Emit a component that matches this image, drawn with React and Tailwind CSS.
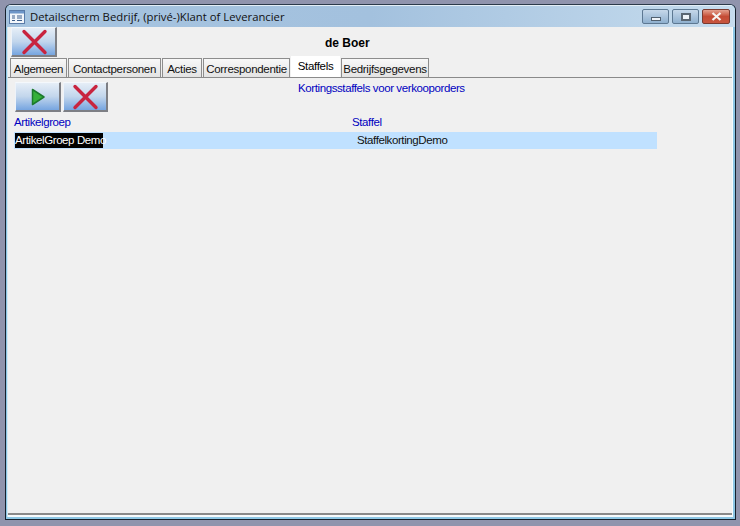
const sans = "font-['Liberation_Sans',Arial,sans-serif]";

function RedX() {
  return (
    <svg width="30" height="26" viewBox="0 0 30 26" className="block">
      <path d="M5 2.500 L26 23.500 M26 2.500 L5 23.500" stroke="#c8243f" strokeWidth="3.400" strokeLinecap="round" fill="none" />
    </svg>
  );
}

function Play() {
  return (
    <svg width="30" height="26" viewBox="0 0 30 26" className="block">
      <path d="M9.500 5.500 L21 13 L9.500 20.500 Z" fill="#35b03a" stroke="#1c7a2c" strokeWidth="1.500" strokeLinejoin="round" />
    </svg>
  );
}

function ToolButton({ children, className = "" }) {
  return (
    <div className={`flex items-center justify-center h-[30px] bg-gradient-to-b from-[#e6eef7] via-[#c2d6ec] to-[#76a5e0] border-t border-l border-t-[#f4f8fc] border-l-[#eef3f9] border-r-2 border-b-2 border-r-[#7d7f85] border-b-[#7d7f85] ${className}`}>
      {children}
    </div>
  );
}

function Tab({ label, w, active }) {
  if (active) {
    return (
      <div className={`${w} h-[22px] -mt-[2px] bg-white flex items-start justify-center pt-[3px] text-black text-[11.5px] leading-[14px] tracking-[-0.3px]`}>
        {label}
      </div>
    );
  }
  return (
    <div className={`${w} h-[20px] bg-gradient-to-b from-[#f8f8f8] to-[#e2e2e2] border-t border-l border-r border-[#8d8d8d] flex items-center justify-center text-[#111] text-[11.5px] leading-[14px] tracking-[-0.3px] whitespace-nowrap`}>
      {label}
    </div>
  );
}

export default function App() {
  return (
    <div className={`w-[740px] h-[526px] bg-[#9094ad] pl-[5px] pr-[4px] pt-[4px] ${sans}`}>
      <div className="w-[731px] h-[516px] rounded-t-[6px] border border-[#16202c] border-t-[#2c3a4a] bg-[#8cc6e4] flex flex-col overflow-hidden">
        <div className="h-[22px] shrink-0 bg-gradient-to-r from-[#a6c4e0] via-[#a3c1de] to-[#c6dcee] border-t border-t-[#e4eef6] flex items-center pl-[3px] pr-[5px]">
          <svg width="16" height="14" viewBox="0 0 16 14" className="mr-[5px] shrink-0">
            <rect x="0.500" y="0.500" width="15" height="13" fill="#f2f6fb" stroke="#5a7ba8" />
            <rect x="1" y="1" width="14" height="2.500" fill="#6d95c8" />
            <path d="M3 6 H6 M3 8 H6 M3 10.500 H6 M8 6 H13 M8 8 H13 M8 10.500 H13" stroke="#3d5f8c" strokeWidth="1" />
          </svg>
          <span className="font-['Open_Sans',sans-serif] text-[11.3px] leading-none text-[#111] whitespace-nowrap">
            Detailscherm Bedrijf, (privé-)Klant of Leverancier
          </span>
          <div className="ml-auto flex items-center gap-[3px]">
            <div className="w-[27px] h-[15px] rounded-[2px] border border-[#5d7892] bg-gradient-to-b from-[#c6d8ea] to-[#8fb0cf] flex items-end justify-center pb-[2px]">
              <div className="w-[10px] h-[4px] bg-[#eef3f8] border border-[#51606f]" />
            </div>
            <div className="w-[27px] h-[15px] rounded-[2px] border border-[#5d7892] bg-gradient-to-b from-[#c6d8ea] to-[#8fb0cf] flex items-center justify-center">
              <div className="w-[10px] h-[8px] border-2 border-[#5a6672] bg-[#eef3f8]" />
            </div>
            <div className="w-[28px] h-[15px] rounded-[2px] border border-[#7a3a30] bg-gradient-to-b from-[#e3a08e] via-[#c44b34] to-[#c8553f] flex items-center justify-center">
              <svg width="11" height="9" viewBox="0 0 11 9">
                <path d="M1.500 1 L9.500 8 M9.500 1 L1.500 8" stroke="#f6f3f0" strokeWidth="2.200" />
              </svg>
            </div>
          </div>
        </div>

        <div className="ml-[1px] mr-[2px] flex-1 min-h-0 bg-[#f0f0f0] border-l border-l-[#d5e8f2] border-r border-r-[#f7fbfd] flex flex-col text-[11.5px]">
          <div className="h-[31px] shrink-0 relative pl-[3px] flex">
            <ToolButton className="w-[46px]"><RedX /></ToolButton>
            <div className="absolute left-[317px] top-[9px] text-[12px] leading-[14px] font-bold text-black">de Boer</div>
          </div>

          <div className="h-[19px] shrink-0 pl-[2px] flex items-start gap-[1px]">
            <Tab label="Algemeen" w="w-[57px]" />
            <Tab label="Contactpersonen" w="w-[93px]" />
            <Tab label="Acties" w="w-[40px]" />
            <Tab label="Correspondentie" w="w-[87px]" />
            <Tab label="Staffels" w="w-[49px]" active />
            <Tab label="Bedrijfsgegevens" w="w-[88px]" />
          </div>
          <div className="h-px shrink-0 bg-[#8a8a8a]" />

          <div className="flex-1 min-h-0 flex flex-col pl-[6px] text-[#0000c0] tracking-[-0.4px]">
            <div className="h-[35px] shrink-0 pt-[4px] pl-[1px] flex gap-[2px] relative">
              <ToolButton className="w-[46px]"><Play /></ToolButton>
              <ToolButton className="w-[45px]"><RedX /></ToolButton>
              <div className="absolute left-[284px] top-[3px] leading-[14px] whitespace-nowrap">Kortingsstaffels voor verkooporders</div>
            </div>
            <div className="h-[18px] mb-[1px] shrink-0 flex items-center leading-[14px]">
              <div className="w-[338px]">Artikelgroep</div>
              <div>Staffel</div>
            </div>
            <div className="w-[643px] h-[17px] shrink-0 bg-[#c0e1ff] flex items-center leading-[14px] text-[#111]">
              <div className="w-[343px] pl-[1px]">
                <span className="inline-block w-[88px] h-[15px] bg-black text-white leading-[14px] whitespace-nowrap">ArtikelGroep Demo</span>
              </div>
              <div className="-mt-[1px]">StaffelkortingDemo</div>
            </div>
            <div className="flex-1" />
          </div>
          <div className="h-[2px] shrink-0 bg-[#8a8a8a]" />
          <div className="h-[2px] shrink-0 bg-[#f7fbfd]" />
        </div>
        <div className="h-[2px] shrink-0 bg-[#8cc6e4]" />
      </div>
    </div>
  );
}
